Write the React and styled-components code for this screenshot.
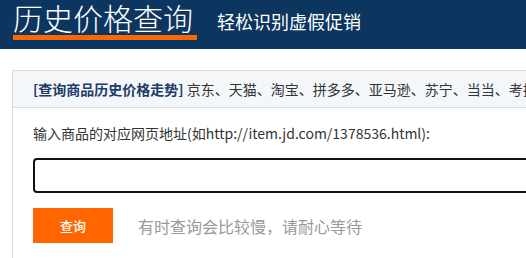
import React from "react";
import styled, { createGlobalStyle } from "styled-components";

const colors = {
  navy: "#0c3560",
  orange: "#ff6600",
  border: "#dcdcdc",
  band: "#f4f7fa",
  text: "#333333",
  hint: "#999999",
};

const GlobalStyle = createGlobalStyle`
  html, body {
    margin: 0;
    padding: 0;
    background: #ffffff;
    overflow: hidden;
  }
  body {
    font-family: "Noto Sans CJK SC", "Noto Sans", sans-serif;
    color: ${colors.text};
  }
`;

const Header = styled.header`
  display: flex;
  align-items: flex-start;
  height: 49px;
  padding: 0 13px;
  background: ${colors.navy};
  box-sizing: border-box;
`;

const Title = styled.h1`
  margin: 0;
  padding-right: 4px;
  font-size: 30px;
  font-weight: 300;
  line-height: 35px;
  color: #ffffff;
  white-space: nowrap;
  border-bottom: 5px solid ${colors.orange};
`;

const Slogan = styled.span`
  margin: 8px 0 0 20px;
  font-size: 18px;
  line-height: 26px;
  color: #ffffff;
  white-space: nowrap;
`;

const Main = styled.main`
  padding: 21px 0 0 12px;
`;

const Card = styled.section`
  width: 700px;
  border: 1px solid ${colors.border};
  border-bottom: none;
`;

const CardHead = styled.div`
  height: 36px;
  padding-left: 20px;
  background: ${colors.band};
  border-bottom: 1px solid ${colors.border};
  font-size: 14px;
  line-height: 36px;
  white-space: nowrap;
  color: ${colors.text};

  strong {
    color: #1d3c66;
    font-weight: 700;
  }
`;

const CardBody = styled.div`
  display: flex;
  flex-direction: column;
  gap: 15px;
  padding: 15px 20px 20px;
`;

const Label = styled.label`
  font-size: 14px;
  line-height: 20px;
  white-space: nowrap;
  color: ${colors.text};
`;

const UrlInput = styled.input`
  height: 35px;
  box-sizing: border-box;
  border: 2px solid #111111;
  border-radius: 4px;
  outline: none;
  padding: 0 10px;
  font-size: 14px;
`;

const Actions = styled.div`
  display: flex;
  align-items: center;
  gap: 25px;
`;

const SearchButton = styled.button`
  width: 80px;
  height: 35px;
  border: none;
  background: ${colors.orange};
  color: #ffffff;
  font-family: inherit;
  font-size: 13px;
  font-weight: 500;
  cursor: pointer;
`;

const Hint = styled.span`
  font-size: 16px;
  color: ${colors.hint};
  white-space: nowrap;
`;

const App = () => (
  <>
    <GlobalStyle />
    <Header>
      <Title>历史价格查询</Title>
      <Slogan>轻松识别虚假促销</Slogan>
    </Header>
    <Main>
      <Card>
        <CardHead>
          <strong>[查询商品历史价格走势]</strong> 京东、天猫、淘宝、拼多多、亚马逊、苏宁、当当、考拉、国美
        </CardHead>
        <CardBody>
          <Label htmlFor="url">输入商品的对应网页地址(如http://item.jd.com/1378536.html):</Label>
          <UrlInput id="url" type="text" />
          <Actions>
            <SearchButton>查询</SearchButton>
            <Hint>有时查询会比较慢，请耐心等待</Hint>
          </Actions>
        </CardBody>
      </Card>
    </Main>
  </>
);

export default App;
